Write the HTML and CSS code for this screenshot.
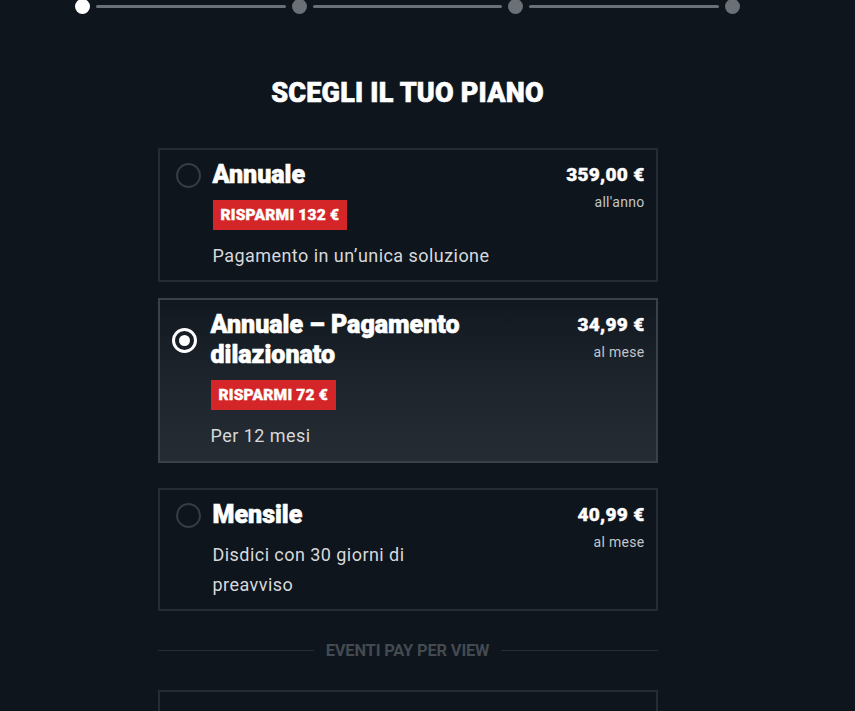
FILE: index.html
```html
<!DOCTYPE html>
<html lang="it">
<head>
<meta charset="utf-8">
<title>Scegli il tuo piano</title>
<link rel="stylesheet" href="styles.css">
</head>
<body>
<div class="page">
  <div class="steps">
    <span class="dot dot-active"></span>
    <span class="bar"></span>
    <span class="dot"></span>
    <span class="bar"></span>
    <span class="dot"></span>
    <span class="bar"></span>
    <span class="dot"></span>
  </div>

  <h1 class="title">SCEGLI IL TUO PIANO</h1>

  <div class="plans">
    <div class="card">
      <div class="left">
        <div class="head">
          <span class="radio"></span>
          <span class="name">Annuale</span>
        </div>
        <div class="body">
          <span class="badge">RISPARMI 132 €</span>
          <p class="desc">Pagamento in un’unica soluzione</p>
        </div>
      </div>
      <div class="price">
        <div class="amount">359,00 €</div>
        <div class="per">all'anno</div>
      </div>
    </div>

    <div class="card card-selected">
      <div class="left">
        <div class="head">
          <span class="radio radio-on"></span>
          <span class="name name-wrap">Annuale – Pagamento dilazionato</span>
        </div>
        <div class="body">
          <span class="badge">RISPARMI 72 €</span>
          <p class="desc">Per 12 mesi</p>
        </div>
      </div>
      <div class="price">
        <div class="amount">34,99 €</div>
        <div class="per">al mese</div>
      </div>
    </div>

    <div class="card card-last">
      <div class="left">
        <div class="head">
          <span class="radio"></span>
          <span class="name">Mensile</span>
        </div>
        <div class="body">
          <p class="desc desc-first">Disdici con 30 giorni di<br>preavviso</p>
        </div>
      </div>
      <div class="price">
        <div class="amount">40,99 €</div>
        <div class="per">al mese</div>
      </div>
    </div>
  </div>

  <div class="divider">
    <span class="line"></span>
    <span class="divider-text">EVENTI PAY PER VIEW</span>
    <span class="line"></span>
  </div>

  <div class="card card-ppv"></div>
</div>
</body>
</html>
```

FILE: styles.css
```css
* { box-sizing: border-box; }
html, body {
  margin: 0;
  padding: 0;
  background: #0e151c;
  color: #ffffff;
  font-family: "Roboto", "Liberation Sans", sans-serif;
  overflow: hidden;
}
.page {
  width: 815px;
  display: flex;
  flex-direction: column;
  align-items: center;
}
.steps {
  width: 665px;
  height: 15px;
  margin-top: -1px;
  display: flex;
  align-items: center;
  gap: 6px;
}
.dot {
  width: 15px;
  height: 15px;
  border-radius: 50%;
  background: #6b7076;
  flex: none;
}
.dot-active { background: #ffffff; }
.bar {
  flex: 1;
  height: 3px;
  background: #6b7076;
  border-radius: 2px;
}
.title {
  margin: 64px 0 0;
  font-size: 27px;
  line-height: 30px;
  font-weight: 900;
  letter-spacing: 0.2px;
  text-align: center;
  -webkit-text-stroke: 0.6px #ffffff;
}
.plans {
  width: 500px;
  margin-top: 40px;
  display: flex;
  flex-direction: column;
  gap: 16px;
}
.card {
  width: 500px;
  border: 2px solid #252c34;
  background: #0e151c;
  display: flex;
  justify-content: space-between;
  padding: 10px 11px 9px 16px;
}
.card-selected {
  border-color: #3b4148;
  background: linear-gradient(180deg, #111820 0%, #1d242b 50%, #262c33 100%);
  padding-left: 12px;
  padding-bottom: 10px;
  margin-bottom: 9px;
}
.left { display: flex; flex-direction: column; }
.head {
  display: flex;
  align-items: center;
  gap: 12px;
}
.card-selected .head { gap: 14px; }
.radio {
  width: 25px;
  height: 25px;
  border-radius: 50%;
  border: 2px solid #363c43;
  flex: none;
}
.radio-on {
  border: 3px solid #ffffff;
  display: flex;
  align-items: center;
  justify-content: center;
}
.radio-on::after {
  content: "";
  width: 11px;
  height: 11px;
  border-radius: 50%;
  background: #ffffff;
}
.name {
  font-size: 25px;
  line-height: 30px;
  font-weight: 900;
  letter-spacing: 0;
  -webkit-text-stroke: 0.6px #ffffff;
}
.name-wrap { width: 270px; }
.body {
  padding-left: 37px;
  display: flex;
  flex-direction: column;
  align-items: flex-start;
}
.card-selected .body { padding-left: 39px; }
.badge {
  margin-top: 10px;
  background: #d42628;
  height: 30px;
  padding: 0 8px;
  font-size: 15.5px;
  line-height: 30px;
  font-weight: 900;
  letter-spacing: 0.2px;
  -webkit-text-stroke: 0.4px #ffffff;
}
.desc {
  margin: 11px 0 0;
  font-size: 18px;
  line-height: 30px;
  color: #d6d9dc;
  font-weight: 400;
  letter-spacing: 0.45px;
}
.desc-first { margin-top: 10px; }
.price {
  text-align: right;
}
.amount {
  font-size: 19px;
  line-height: 30px;
  font-weight: 900;
  letter-spacing: 0.3px;
  -webkit-text-stroke: 0.4px #ffffff;
}
.per {
  margin-top: 4px;
  font-size: 14px;
  line-height: 16px;
  color: #c2c6ca;
  letter-spacing: 0.3px;
}
.divider {
  width: 500px;
  margin-top: 29px;
  display: flex;
  align-items: center;
  gap: 12px;
  height: 20px;
}
.line {
  flex: 1;
  height: 1px;
  background: #262d34;
}
.divider-text {
  font-size: 16.5px;
  font-weight: 700;
  color: #434a51;
  letter-spacing: -0.2px;
}
.card-ppv {
  margin-top: 30px;
  height: 80px;
}
```
